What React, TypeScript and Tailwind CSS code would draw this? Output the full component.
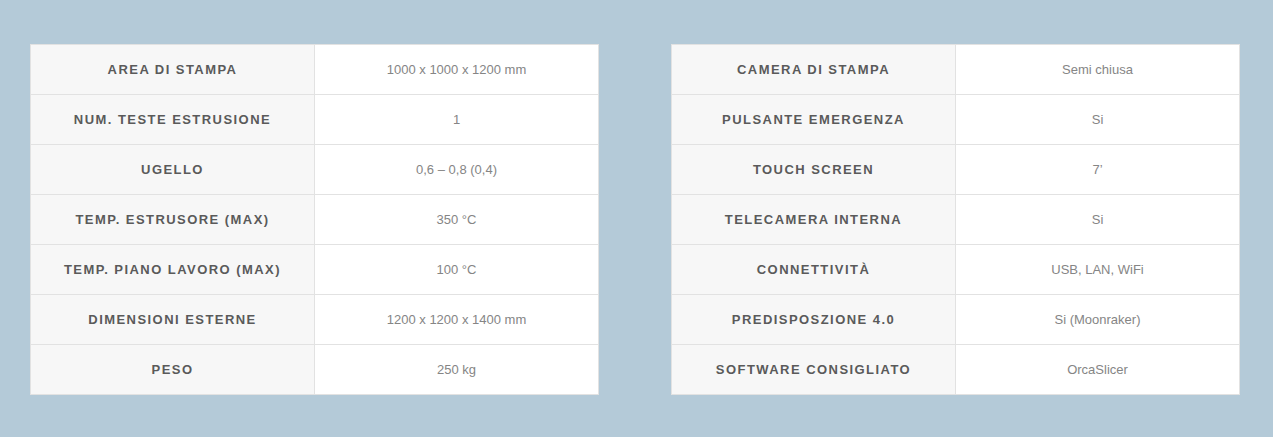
const left: [string, string][] = [
  ["Area di stampa", "1000 x 1000 x 1200 mm"],
  ["Num. teste estrusione", "1"],
  ["Ugello", "0,6 – 0,8 (0,4)"],
  ["Temp. estrusore (max)", "350 °C"],
  ["Temp. piano lavoro (max)", "100 °C"],
  ["Dimensioni esterne", "1200 x 1200 x 1400 mm"],
  ["Peso", "250 kg"],
];

const right: [string, string][] = [
  ["Camera di stampa", "Semi chiusa"],
  ["Pulsante emergenza", "Si"],
  ["Touch screen", "7’"],
  ["Telecamera interna", "Si"],
  ["Connettività", "USB, LAN, WiFi"],
  ["Predisposzione 4.0", "Si (Moonraker)"],
  ["Software consigliato", "OrcaSlicer"],
];

function SpecTable({ rows }: { rows: [string, string][] }) {
  return (
    <table className="w-[569px] table-fixed border-collapse border border-[#dedede]">
      <tbody>
        {rows.map(([label, value]) => (
          <tr key={label} className="h-[50px]">
            <th className="w-1/2 border border-[#e2e2e2] bg-[#f7f7f7] text-center align-middle text-[13px] font-bold uppercase tracking-[1.45px] text-[#5a5a5a]">
              {label}
            </th>
            <td className="w-1/2 border border-[#e2e2e2] bg-white text-center align-middle text-[13px] text-[#858585]">
              {value}
            </td>
          </tr>
        ))}
      </tbody>
    </table>
  );
}

export default function App() {
  return (
    <div
      className="flex h-[437px] w-full items-start gap-[72px] bg-[#b4cad8] px-[30px] pt-[44px]"
      style={{ fontFamily: '"Liberation Sans", Arial, sans-serif' }}
    >
      <SpecTable rows={left} />
      <SpecTable rows={right} />
    </div>
  );
}
